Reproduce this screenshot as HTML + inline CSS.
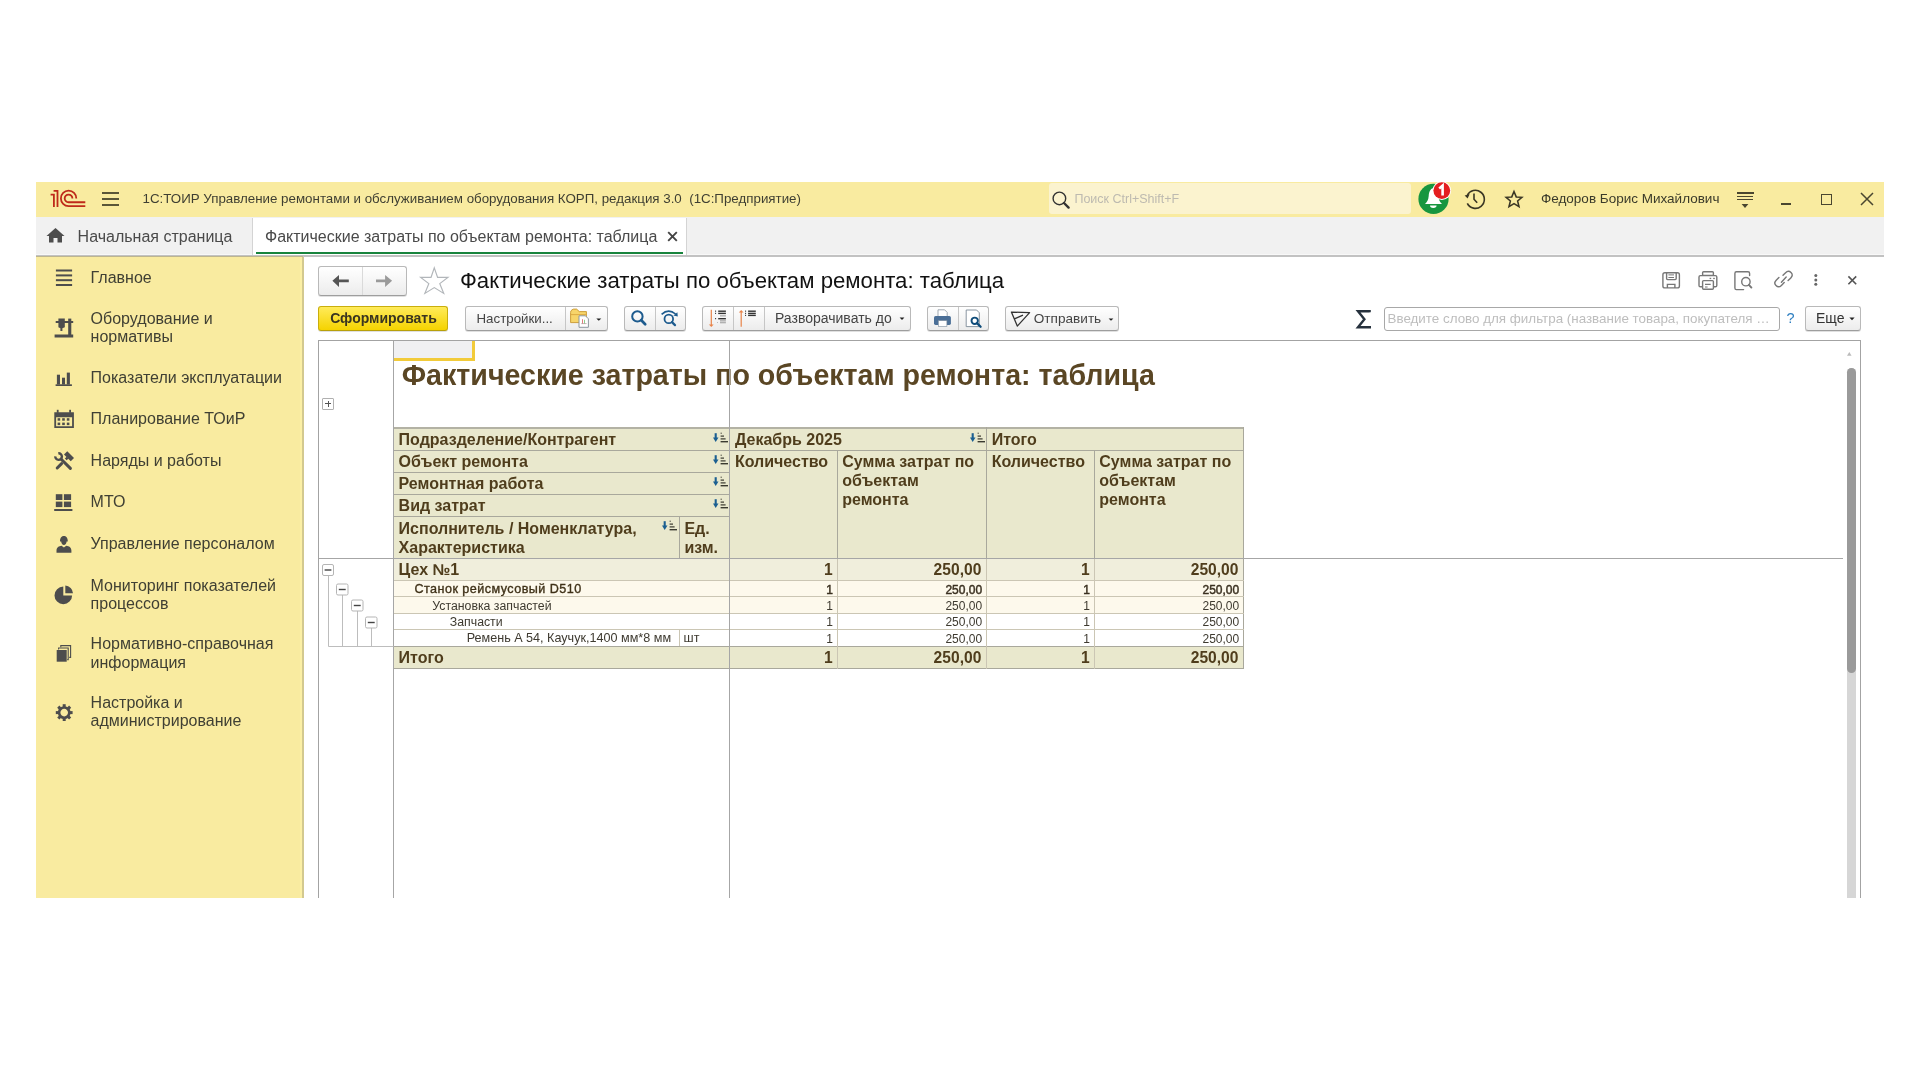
<!DOCTYPE html>
<html><head><meta charset="utf-8"><title>1C</title>
<style>
html,body{margin:0;padding:0;width:1920px;height:1080px;overflow:hidden;background:#fff;}
#root{position:absolute;left:0;top:0;width:1920px;height:1080px;background:#fff;filter:blur(0.35px);}
body{position:relative;font-family:"Liberation Sans", sans-serif;}
.t{position:absolute;white-space:pre;font-family:"Liberation Sans", sans-serif;}
.r{position:absolute;}
</style></head><body><div id="root">
<div class="r" style="left:36px;top:182px;width:1848px;height:35px;background:#F9EBA0;"></div>
<div class="r" style="left:36px;top:216.5px;width:1848px;height:1.1999999999999886px;background:#DDCD88;"></div>
<div class="r" style="left:36px;top:217px;width:1848px;height:37px;background:#F1F1F1;"></div>
<div class="r" style="left:36px;top:254px;width:1848px;height:1px;background:#F8F8F8;"></div>
<div class="r" style="left:36px;top:255px;width:1848px;height:2px;background:#C2C2C2;"></div>
<div class="r" style="left:36px;top:255.5px;width:267px;height:1.5px;background:#BDB590;"></div>
<div class="r" style="left:36px;top:257px;width:266px;height:641px;background:#F9EBA0;"></div>
<div class="r" style="left:299.5px;top:257px;width:2.5px;height:641px;background:#FBEFA5;"></div>
<div class="r" style="left:302px;top:257px;width:1.5px;height:641px;background:#D3C98F;"></div>
<div class="r" style="left:304px;top:257px;width:1580px;height:641px;background:#FFFFFF;"></div>
<svg class="r" style="left:44px;top:186px" width="50" height="26" viewBox="0 0 50 26">
<g fill="none" stroke="#BE2A1A" stroke-width="1.8">
<path d="M6.6 8.6 H9.9 V20.9"/><path d="M9.6 4.8 H13.5 V20.9"/>
<path d="M32.3 12.4 A7.7 7.7 0 1 0 24.6 20.1 H41.3"/>
<path d="M28.4 12.4 A3.85 3.85 0 1 0 24.6 16.25 H41.3"/>
</g></svg>
<div class="r" style="left:102px;top:192px;width:17px;height:2px;background:#5a5638;"></div>
<div class="r" style="left:102px;top:198px;width:17px;height:2px;background:#5a5638;"></div>
<div class="r" style="left:102px;top:204px;width:17px;height:2px;background:#5a5638;"></div>
<div class="t" style="left:142.50px;top:192.12px;font-size:13.33px;line-height:13.33px;color:#3F3F32;font-weight:400;">1С:ТОИР Управление ремонтами и обслуживанием оборудования КОРП, редакция 3.0&nbsp; (1С:Предприятие)</div>
<div class="r" style="left:1049px;top:183px;width:362px;height:31px;background:#FBF3CF;border-radius:3px;"></div>
<svg class="r" style="left:1049px;top:187.5px" width="26" height="26" viewBox="0 0 26 26">
<circle cx="10.4" cy="10.4" r="6.3" fill="none" stroke="#333" stroke-width="1.4"/>
<path d="M15 15 L19.6 19.6" stroke="#333" stroke-width="2.4" stroke-linecap="round"/></svg>
<div class="t" style="left:1074.40px;top:193.02px;font-size:12.5px;line-height:12.5px;color:#BDBAB0;font-weight:400;">Поиск Ctrl+Shift+F</div>
<svg class="r" style="left:1414px;top:180px" width="40" height="38" viewBox="0 0 40 38">
<circle cx="19.5" cy="18.9" r="15.1" fill="#17963F"/>
<path d="M19.3 8 C16 9 15 12 14.7 16 C14.4 20 13 22 11 24 H28 C26 22 24.6 20 24.3 16 C24 12 22.8 9 19.3 8 Z" fill="#fff"/>
<path d="M16 25.6 H22.6 A3.3 2.3 0 0 1 16 25.6 Z" fill="#fff"/>
<circle cx="27.8" cy="10.6" r="9.3" fill="#fff"/>
<circle cx="27.8" cy="10.6" r="8.4" fill="#E41E1F"/>
<path d="M25.2 8.4 L28.6 5.6 V15.6" fill="none" stroke="#fff" stroke-width="2.6" stroke-linejoin="miter"/>
</svg>
<svg class="r" style="left:1462px;top:187px" width="24" height="24" viewBox="0 0 24 24">
<path d="M5.2 8.5 A9 9 0 1 1 5.3 16.4" fill="none" stroke="#3a3624" stroke-width="1.6"/>
<path d="M2.6 8.6 L7.6 7.2 L5.6 11.6 Z" fill="#3a3624"/>
<path d="M12 6.6 V12.2 L15.2 15.8" fill="none" stroke="#3a3624" stroke-width="1.6"/>
</svg>
<svg class="r" style="left:1502px;top:187px" width="24" height="24" viewBox="0 0 24 24">
<path transform="translate(12 12.4) scale(0.86) translate(-12 -12)" d="M12 2.9 L14.6 9.1 L21.2 9.6 L16.2 13.9 L17.8 20.4 L12 16.9 L6.2 20.4 L7.8 13.9 L2.8 9.6 L9.4 9.1 Z" fill="none" stroke="#3a3624" stroke-width="1.8" stroke-linejoin="miter"/>
</svg>
<div class="t" style="left:1541.00px;top:191.97px;font-size:13.5px;line-height:13.5px;color:#3a3a2a;font-weight:400;">Федоров Борис Михайлович</div>
<div class="r" style="left:1736.5px;top:192.4px;width:17.09999999999991px;height:1.4000000000000057px;background:#4a4630;"></div>
<div class="r" style="left:1737px;top:195.5px;width:16.200000000000045px;height:1.4000000000000057px;background:#4a4630;"></div>
<div class="r" style="left:1737px;top:198.6px;width:16.200000000000045px;height:1.4000000000000057px;background:#4a4630;"></div>
<svg class="r" style="left:1740px;top:203px" width="10" height="6" viewBox="0 0 10 6"><path d="M1.6 1 H8.4 L5 5 Z" fill="#4a4630"/></svg>
<div class="r" style="left:1781px;top:203px;width:10px;height:2px;background:#4a4630;"></div>
<div class="r" style="left:1821px;top:194px;width:11px;height:11px;border:1.6px solid #4a4630;box-sizing:border-box;"></div>
<svg class="r" style="left:1859px;top:191px" width="16" height="16" viewBox="0 0 16 16"><path d="M2 2 L14 14 M14 2 L2 14" stroke="#4a4630" stroke-width="1.5"/></svg>
<svg class="r" style="left:46px;top:227px" width="20" height="17" viewBox="0 0 20 17">
<path d="M9.5 1 L18.5 9 H16 V15.5 H11.5 V11 H7.5 V15.5 H3 V9 H0.5 Z" fill="#4d4d4d"/></svg>
<div class="t" style="left:77.60px;top:229.26px;font-size:16px;line-height:16px;color:#4a4a4a;font-weight:400;">Начальная страница</div>
<div class="r" style="left:252px;top:218px;width:1px;height:37px;background:#D4D4D4;"></div>
<div class="r" style="left:253px;top:218px;width:433px;height:37px;background:#FFFFFF;"></div>
<div class="r" style="left:686px;top:218px;width:1px;height:37px;background:#D4D4D4;"></div>
<div class="r" style="left:256px;top:252px;width:427px;height:2px;background:#18843D;"></div>
<div class="t" style="left:265.00px;top:229.26px;font-size:16px;line-height:16px;color:#4a4a4a;font-weight:400;">Фактические затраты по объектам ремонта: таблица</div>
<svg class="r" style="left:666px;top:230px" width="13" height="13" viewBox="0 0 13 13"><path d="M2.2 2.2 L10.8 10.8 M10.8 2.2 L2.2 10.8" stroke="#444" stroke-width="1.9"/></svg>
<div class="t" style="left:90.60px;top:269.76px;font-size:16px;line-height:16px;color:#404034;font-weight:400;">Главное</div>
<div class="t" style="left:90.60px;top:310.56px;font-size:16px;line-height:16px;color:#404034;font-weight:400;">Оборудование и</div>
<div class="t" style="left:90.60px;top:328.76px;font-size:16px;line-height:16px;color:#404034;font-weight:400;">нормативы</div>
<div class="t" style="left:90.60px;top:369.76px;font-size:16px;line-height:16px;color:#404034;font-weight:400;">Показатели эксплуатации</div>
<div class="t" style="left:90.60px;top:411.36px;font-size:16px;line-height:16px;color:#404034;font-weight:400;">Планирование ТОиР</div>
<div class="t" style="left:90.60px;top:452.86px;font-size:16px;line-height:16px;color:#404034;font-weight:400;">Наряды и работы</div>
<div class="t" style="left:90.60px;top:494.36px;font-size:16px;line-height:16px;color:#404034;font-weight:400;">МТО</div>
<div class="t" style="left:90.60px;top:535.86px;font-size:16px;line-height:16px;color:#404034;font-weight:400;">Управление персоналом</div>
<div class="t" style="left:90.60px;top:577.66px;font-size:16px;line-height:16px;color:#404034;font-weight:400;">Мониторинг показателей</div>
<div class="t" style="left:90.60px;top:595.76px;font-size:16px;line-height:16px;color:#404034;font-weight:400;">процессов</div>
<div class="t" style="left:90.60px;top:636.46px;font-size:16px;line-height:16px;color:#404034;font-weight:400;">Нормативно-справочная</div>
<div class="t" style="left:90.60px;top:654.56px;font-size:16px;line-height:16px;color:#404034;font-weight:400;">информация</div>
<div class="t" style="left:90.60px;top:695.26px;font-size:16px;line-height:16px;color:#404034;font-weight:400;">Настройка и</div>
<div class="t" style="left:90.60px;top:713.36px;font-size:16px;line-height:16px;color:#404034;font-weight:400;">администрирование</div>
<svg class="r" style="left:0;top:0" width="304" height="898" viewBox="0 0 304 898">
<g fill="#4d4d4d">
<rect x="55.9" y="269.5" width="16.2" height="2"/><rect x="55.9" y="274.4" width="16.2" height="2"/><rect x="55.9" y="279.2" width="16.2" height="2"/><rect x="55.9" y="284" width="16.2" height="2"/>
<!-- equipment -->
<rect x="55.7" y="321" width="17.5" height="2"/>
<path d="M58.4 318.6 H64.8 V327.3 L62.4 328.2 V331 H60.4 V328.2 L58.4 327.3 Z"/>
<rect x="68.2" y="318.6" width="3.1" height="18"/>
<rect x="54.6" y="334.5" width="18.6" height="3"/>
<!-- chart -->
<rect x="56.9" y="374.7" width="3.1" height="9.8"/><rect x="62" y="377.7" width="3" height="6.8"/><rect x="66.8" y="372.6" width="3.1" height="11.9"/>
<rect x="55.6" y="384.3" width="16.3" height="1.7"/>
<!-- calendar -->
<path fill-rule="evenodd" d="M54.3 412.3 H73.9 V428.1 H54.3 Z M56.1 417.3 H72.1 V426.3 H56.1 Z"/>
<rect x="56.8" y="409.8" width="1.8" height="3"/><rect x="69.2" y="409.8" width="1.8" height="3"/>
<rect x="57.6" y="418.2" width="2.6" height="2.5"/><rect x="62.2" y="418.2" width="2.6" height="2.5"/><rect x="66.8" y="418.2" width="2.6" height="2.5"/>
<rect x="57.6" y="422.6" width="2.6" height="2.5"/><rect x="62.2" y="422.6" width="2.6" height="2.5"/><rect x="66.8" y="422.6" width="2.6" height="2.5"/>
<!-- MTO -->
<rect x="55.8" y="494.2" width="6.6" height="5.8"/><rect x="63.9" y="494.2" width="7.2" height="5.8"/>
<rect x="55.8" y="501.6" width="6.6" height="5.5"/><rect x="63.9" y="501.6" width="7.2" height="5.5"/>
<rect x="54.2" y="509" width="18.2" height="2"/>
<!-- person -->
<path d="M60 541.5 C60 537.5 61.8 536 63.9 536 C66 536 67.8 537.5 67.8 541.5 L66.6 541.6 C66.4 543.6 65.4 545 63.9 545 C62.4 545 61.4 543.6 61.2 541.6 Z"/>
<path d="M56.5 550.5 C56.5 547.6 59 546 61.5 545.8 L63.9 547.6 L66.3 545.8 C68.9 546 71.4 547.6 71.4 550.5 V552.8 H56.5 Z"/>
<!-- pie -->
<path d="M63.3 586.6 V595.4 H72.1 A8.8 8.8 0 1 1 63.3 586.6 Z"/>
<path d="M65.3 585.6 A8 8 0 0 1 73 593.3 H65.3 Z"/>
<!-- docs -->
<rect x="56.7" y="650" width="10" height="11.7"/>
</g>
<g fill="none" stroke="#4d4d4d" stroke-width="1.1">
<path d="M58.6 649.4 V648 H68.2 V659.6 H67.2"/>
<path d="M60.8 647.2 V645.6 H70.6 V657.4 H69.2"/>
</g>
<g transform="translate(52 448)" fill="none" stroke="#4d4d4d">
<path d="M9.2 11.2 L18.4 20.4" stroke-width="3" stroke-linecap="round"/>
<path d="M6.31 5.31 A3.3 3.3 0 1 1 3.31 8.31" stroke-width="2.4"/>
<path d="M5.2 20 L9.6 15.6" stroke-width="3" stroke-linecap="round"/>
</g>
<g transform="translate(69 456.2) rotate(45)" fill="#4d4d4d"><rect x="-4.8" y="-2.3" width="9.6" height="4.6"/><rect x="-1.3" y="2" width="2.6" height="2.6"/></g>
<g transform="translate(64.2 712.6)" fill="#4d4d4d">
<circle cx="0" cy="0" r="5.1" fill="none" stroke="#4d4d4d" stroke-width="2.6"/>
<rect x="-1.5" y="-8.4" width="3" height="3.4" transform="rotate(0)"/><rect x="-1.5" y="-8.4" width="3" height="3.4" transform="rotate(45)"/>
<rect x="-1.5" y="-8.4" width="3" height="3.4" transform="rotate(90)"/><rect x="-1.5" y="-8.4" width="3" height="3.4" transform="rotate(135)"/>
<rect x="-1.5" y="-8.4" width="3" height="3.4" transform="rotate(180)"/><rect x="-1.5" y="-8.4" width="3" height="3.4" transform="rotate(225)"/>
<rect x="-1.5" y="-8.4" width="3" height="3.4" transform="rotate(270)"/><rect x="-1.5" y="-8.4" width="3" height="3.4" transform="rotate(315)"/>
</g>
</svg>
<div class="r" style="left:318px;top:266px;width:89px;height:30px;box-sizing:border-box;border:1px solid #B9B9B9;border-bottom-color:#9E9E9E;border-radius:3px;background:linear-gradient(#FFFFFF,#ECECEC);box-shadow:0 1px 0 rgba(0,0,0,0.12);"></div>
<div class="r" style="left:362px;top:267px;width:1px;height:28px;background:#DADADA;"></div>
<svg class="r" style="left:316px;top:262px" width="140" height="38" viewBox="0 0 140 38">
<path d="M16.4 18.8 L23 12.9 V17.4 H32.8 V20.2 H23 V25.1 Z" fill="#555"/>
<path d="M76.1 18.8 L69.1 12.9 V17.4 H60 V20.2 H69.1 V25.1 Z" fill="#9A9A9A"/>
<path d="M118.3 5.9 L121.6 15.4 L131.9 15.4 L123.8 21.6 L127.7 31.4 L118.3 25.6 L108.9 31.4 L112.8 21.6 L104.7 15.4 L115 15.4 Z" fill="none" stroke="#B2B6BA" stroke-width="1.2"/>
</svg>
<div class="t" style="left:460.00px;top:269.81px;font-size:22.2px;line-height:22.2px;color:#111;font-weight:400;">Фактические затраты по объектам ремонта: таблица</div>
<svg class="r" style="left:1656px;top:266px" width="210" height="30" viewBox="0 0 210 30">
<g fill="none" stroke="#777" stroke-width="1.4">
<rect x="6.9" y="6.7" width="16.5" height="15.2" rx="2"/>
<path d="M10.6 6.9 V12.6 Q10.6 13.6 11.6 13.6 H19.2 Q20.2 13.6 20.2 12.6 V6.9"/>
<path d="M12.4 8.9 H18 M12.4 11.5 H18" stroke-width="1"/>
<path d="M11.4 22 V18.4 H18.9 V22"/>
<rect x="46.6" y="5.8" width="10.8" height="3.6" rx="1"/>
<path d="M46.3 20.8 H44.4 Q43 20.8 43 19.4 V11 Q43 9.6 44.4 9.6 H59.4 Q60.8 9.6 60.8 11 V19.4 Q60.8 20.8 59.4 20.8 H57.6"/>
<rect x="46.6" y="14.6" width="10.8" height="8.6" rx="1"/>
<path d="M49 18.4 H54.7 M49 21 H51.6" stroke-width="1.1"/>
</g>
<g fill="#777"><rect x="53.6" y="11.8" width="1.6" height="1.3"/><rect x="57.2" y="11.8" width="1.6" height="1.3"/></g>
<g fill="none" stroke="#777" stroke-width="1.4" stroke-linecap="round">
<path d="M87.7 15.5 V23.4 M79.6 9.5 Q" stroke="none"/>
<path d="M93.6 9.6 V7.4 Q93.6 5.8 92 5.8 H80.4 Q78.9 5.8 78.9 7.4 V22 Q78.9 23.6 80.4 23.6 H87.6"/>
<circle cx="89.9" cy="15.7" r="4.2"/>
<path d="M92.9 18.8 L95.4 21.6" stroke-width="1.9"/>
<path d="M122.9 11.5 L120.2 14.2 Q117.4 17 120 19.6 Q122.6 22.2 125.4 19.4 L128.2 16.6"/>
<path d="M127 9.3 L129.6 6.7 Q132.4 3.9 135 6.5 Q137.6 9.1 134.8 11.9 L132.1 14.6"/>
<path d="M125.4 16.2 L130.2 11.1"/>
</g>
<g fill="#666"><circle cx="159.8" cy="9.5" r="1.5"/><circle cx="159.8" cy="13.9" r="1.5"/><circle cx="159.8" cy="18.3" r="1.5"/></g>
<path d="M192.4 10.4 L200.2 18.2 M200.2 10.4 L192.4 18.2" stroke="#555" stroke-width="1.6"/>
</svg>
<div class="r" style="left:318px;top:306px;width:130px;height:25px;box-sizing:border-box;border:1px solid #C9AE0C;border-bottom-color:#B8A00A;border-radius:3px;background:linear-gradient(#FFEB5A,#F5D300);box-shadow:0 1px 0 rgba(0,0,0,0.12);"></div>
<div class="t" style="left:330.20px;top:311.35px;font-size:14px;line-height:14px;color:#3a3520;font-weight:700;">Сформировать</div>
<div class="r" style="left:465px;top:306px;width:143px;height:25px;box-sizing:border-box;border:1px solid #B9B9B9;border-bottom-color:#9E9E9E;border-radius:3px;background:linear-gradient(#FFFFFF,#ECECEC);box-shadow:0 1px 0 rgba(0,0,0,0.12);"></div>
<div class="r" style="left:565px;top:307px;width:1px;height:23px;background:#C6C6C6;"></div>
<div class="t" style="left:476.50px;top:311.94px;font-size:13.3px;line-height:13.3px;color:#444;font-weight:400;">Настройки...</div>
<svg class="r" style="left:562px;top:304px" width="50" height="30" viewBox="0 0 50 30">
<path d="M8.6 18.6 V8.4 Q8.6 6.6 10 5.8 L11.5 5.1 H14.6 L17.3 7.6 H24.4 V18.6 Z" fill="#F7D56A" stroke="#C8962E" stroke-width="0.9"/>
<path d="M8.6 10.6 H24.4" stroke="#D9A640" stroke-width="0.9"/>
<path d="M17 11.8 H23.4 L26.4 14.8 V23.3 H17 Z" fill="#fff" stroke="#8D979F" stroke-width="1"/>
<rect x="20" y="15.2" width="1" height="4.3" fill="#E07C7C"/><rect x="22" y="15.8" width="1" height="3.7" fill="#8FD08F"/>
<path d="M19.3 19.6 H24.6" stroke="#9a7a7a" stroke-width="0.6"/>
<path d="M34.3 14.4 H39.3 L36.8 16.8 Z" fill="#222"/>
</svg>
<div class="r" style="left:624px;top:306px;width:62px;height:25px;box-sizing:border-box;border:1px solid #B9B9B9;border-bottom-color:#9E9E9E;border-radius:3px;background:linear-gradient(#FFFFFF,#ECECEC);box-shadow:0 1px 0 rgba(0,0,0,0.12);"></div>
<div class="r" style="left:655px;top:307px;width:1px;height:23px;background:#C6C6C6;"></div>
<svg class="r" style="left:624px;top:304px" width="62" height="30" viewBox="0 0 62 30">
<g fill="none" stroke="#1D5B8E">
<circle cx="13.4" cy="12.4" r="5.2" stroke-width="2"/>
<path d="M17.3 16.3 L21.2 20.2" stroke-width="2.7" stroke-linecap="round"/>
<circle cx="44.8" cy="14.9" r="4.3" stroke-width="1.8"/>
<path d="M48 18.1 L51 21.1" stroke-width="2.2" stroke-linecap="round"/>
<path d="M37.6 10.3 Q44.5 4 51.6 10" stroke-width="1.6"/>
</g>
<path d="M49.4 11.6 L53.4 8.2 L53.8 12.4 Z" fill="#1D5B8E"/>
</svg>
<div class="r" style="left:702px;top:306px;width:209px;height:25px;box-sizing:border-box;border:1px solid #B9B9B9;border-bottom-color:#9E9E9E;border-radius:3px;background:linear-gradient(#FFFFFF,#ECECEC);box-shadow:0 1px 0 rgba(0,0,0,0.12);"></div>
<div class="r" style="left:733px;top:307px;width:1px;height:23px;background:#C6C6C6;"></div>
<div class="r" style="left:764px;top:307px;width:1px;height:23px;background:#C6C6C6;"></div>
<svg class="r" style="left:700px;top:304px" width="64" height="30" viewBox="0 0 64 30">
<g stroke="#E8844A" stroke-width="1.2" fill="none"><path d="M11.3 5.8 V21"/><path d="M41.2 8 V22.8"/></g>
<path d="M8.9 20.4 H13.7 L11.3 23 Z" fill="#E8844A"/><path d="M38.8 8.6 H43.6 L41.2 6 Z" fill="#E8844A"/>
<g fill="#333"><rect x="15" y="6.6" width="1.1" height="1.1"/><rect x="18.2" y="6.5" width="7.7" height="1.4"/>
<rect x="15" y="8.8" width="1.1" height="1.1"/><rect x="18.2" y="8.7" width="7.7" height="1.4"/>
<rect x="15" y="14.1" width="1.1" height="1.1"/><rect x="18.2" y="14" width="7.7" height="1.4"/></g>
<g fill="#AAA"><rect x="20" y="11.2" width="5.9" height="1.3"/><rect x="20" y="16.2" width="5.9" height="1.3"/><rect x="20" y="18.1" width="5.9" height="1.2"/><rect x="17" y="18" width="0.9" height="0.9"/></g>
<g fill="#333"><rect x="45" y="6.6" width="1.1" height="1.1"/><rect x="48.1" y="6.5" width="7.7" height="1.4"/>
<rect x="45" y="8.8" width="1.1" height="1.1"/><rect x="48.1" y="8.7" width="7.7" height="1.4"/>
<rect x="45" y="10.8" width="1.1" height="1.1"/><rect x="48.1" y="10.7" width="7.7" height="1.4"/></g>
</svg>
<div class="t" style="left:775.00px;top:311.35px;font-size:14px;line-height:14px;color:#444;font-weight:400;">Разворачивать до</div>
<svg class="r" style="left:898px;top:316px" width="8" height="6" viewBox="0 0 8 6"><path d="M1.6 1.6 H6.4 L4 4 Z" fill="#222"/></svg><div class="r" style="left:927px;top:306px;width:62px;height:25px;box-sizing:border-box;border:1px solid #B9B9B9;border-bottom-color:#9E9E9E;border-radius:3px;background:linear-gradient(#FFFFFF,#ECECEC);box-shadow:0 1px 0 rgba(0,0,0,0.12);"></div>
<div class="r" style="left:958px;top:307px;width:1px;height:23px;background:#C6C6C6;"></div>
<svg class="r" style="left:926px;top:304px" width="62" height="30" viewBox="0 0 62 30">
<path d="M12 12 V5.8 H18.6 L21.2 8.4 V12" fill="#fff" stroke="#8a96a0" stroke-width="0.8"/>
<rect x="8" y="12" width="16.9" height="8.9" rx="1.6" fill="#4B6F97"/>
<rect x="12.3" y="16.6" width="8.6" height="6" fill="#fff" stroke="#7a8a9a" stroke-width="0.6"/>
<path d="M40.2 6 H50.6 L53.3 8.8 V22.6 H40.2 Z" fill="#fff" stroke="#7d8a96" stroke-width="0.9"/>
<circle cx="48.7" cy="16.8" r="3.2" fill="none" stroke="#0F4C7A" stroke-width="1.9"/>
<path d="M51 19.1 L54.6 22.7" stroke="#0F4C7A" stroke-width="2.3" stroke-linecap="round"/>
</svg>
<div class="r" style="left:1005px;top:306px;width:114px;height:25px;box-sizing:border-box;border:1px solid #B9B9B9;border-bottom-color:#9E9E9E;border-radius:3px;background:linear-gradient(#FFFFFF,#ECECEC);box-shadow:0 1px 0 rgba(0,0,0,0.12);"></div>
<svg class="r" style="left:1005px;top:304px" width="114" height="30" viewBox="0 0 114 30">
<path d="M6.4 8.1 L24.6 8.6 L12.3 22.1 Z M9.4 14.9 L18 11.2" fill="none" stroke="#333" stroke-width="1.3" stroke-linejoin="round"/>
<path d="M103.6 14.4 H108.4 L106 16.8 Z" fill="#222"/>
</svg>
<div class="t" style="left:1033.80px;top:311.69px;font-size:13.6px;line-height:13.6px;color:#444;font-weight:400;">Отправить</div>
<svg class="r" style="left:1354px;top:308px" width="20" height="22" viewBox="0 0 20 22"><path d="M15.6 4.3 V3.2 H4 L10.4 11.3 L4 19.2 H15.8 V18" fill="none" stroke="#26313D" stroke-width="2.4" stroke-linejoin="miter"/></svg><div class="r" style="left:1384px;top:307px;width:396px;height:24px;box-sizing:border-box;border:1px solid #A8A8A8;border-radius:3px;background:#fff;"></div>
<div class="t" style="left:1387.50px;top:312.06px;font-size:13.4px;line-height:13.4px;color:#BDBDBD;font-weight:400;">Введите слово для фильтра (название товара, покупателя …</div>
<div class="t" style="left:1786.40px;top:311.33px;font-size:14.5px;line-height:14.5px;color:#2F7FC1;font-weight:400;">?</div>
<div class="r" style="left:1805px;top:306px;width:56px;height:25px;box-sizing:border-box;border:1px solid #B9B9B9;border-bottom-color:#9E9E9E;border-radius:3px;background:linear-gradient(#FFFFFF,#ECECEC);box-shadow:0 1px 0 rgba(0,0,0,0.12);"></div>
<div class="t" style="left:1816.00px;top:311.35px;font-size:14px;line-height:14px;color:#333;font-weight:400;">Еще</div>
<svg class="r" style="left:1848px;top:316px" width="8" height="6" viewBox="0 0 8 6"><path d="M1.4 1.6 H6.6 L4 4.2 Z" fill="#222"/></svg><div class="r" style="left:318px;top:340px;width:1543px;height:558px;box-sizing:border-box;border:1px solid #A3A3A3;border-bottom:none;background:#fff;"></div>
<div class="r" style="left:394px;top:341px;width:81px;height:20px;background:#F0F0F2;"></div>
<div class="r" style="left:394px;top:358px;width:81px;height:3px;background:#F2CB3A;"></div>
<div class="r" style="left:472px;top:341px;width:3px;height:20px;background:#F2CB3A;"></div>
<div class="r" style="left:322px;top:398px;width:12px;height:12px;box-sizing:border-box;border:1px solid #B0B0B0;background:#fff;border-radius:1px;"></div>
<div class="r" style="left:324.6px;top:403.4px;width:6.7999999999999545px;height:1.1000000000000227px;background:#555;"></div>
<div class="r" style="left:327.5px;top:400.5px;width:1.1000000000000227px;height:6.899999999999977px;background:#555;"></div>
<div class="t" style="left:401.70px;top:361.39px;font-size:28.6px;line-height:28.6px;color:#5A4624;font-weight:700;">Фактические затраты по объектам ремонта: таблица</div>
<div class="r" style="left:394px;top:428px;width:849px;height:130px;background:#E9E8CD;"></div>
<div class="r" style="left:394px;top:559px;width:849px;height:22px;background:#F0EEDC;"></div>
<div class="r" style="left:394px;top:581px;width:849px;height:32px;background:#FDF9EC;"></div>
<div class="r" style="left:394px;top:646px;width:849px;height:22px;background:#E9E8CD;"></div>
<div class="r" style="left:394px;top:427px;width:850px;height:2px;background:#B3B2A4;"></div>
<div class="r" style="left:394px;top:450px;width:336px;height:1px;background:#A9A89C;"></div>
<div class="r" style="left:394px;top:472px;width:336px;height:1px;background:#A9A89C;"></div>
<div class="r" style="left:394px;top:494px;width:336px;height:1px;background:#A9A89C;"></div>
<div class="r" style="left:730px;top:450px;width:514px;height:1px;background:#A9A89C;"></div>
<div class="r" style="left:394px;top:516px;width:336px;height:1px;background:#A9A89C;"></div>
<div class="r" style="left:679px;top:516px;width:1px;height:42px;background:#A9A89C;"></div>
<div class="r" style="left:837px;top:450px;width:1px;height:108px;background:#A9A89C;"></div>
<div class="r" style="left:986px;top:427px;width:1px;height:131px;background:#A9A89C;"></div>
<div class="r" style="left:1094px;top:450px;width:1px;height:108px;background:#A9A89C;"></div>
<div class="r" style="left:1243px;top:427px;width:1px;height:242px;background:#A9A89C;"></div>
<div class="r" style="left:394px;top:580px;width:850px;height:1px;background:#CBC6B4;"></div>
<div class="r" style="left:394px;top:596px;width:850px;height:1px;background:#CBC6B4;"></div>
<div class="r" style="left:394px;top:613px;width:850px;height:1px;background:#CBC6B4;"></div>
<div class="r" style="left:394px;top:629px;width:850px;height:1px;background:#CBC6B4;"></div>
<div class="r" style="left:394px;top:646px;width:850px;height:1px;background:#A9A89C;"></div>
<div class="r" style="left:394px;top:668px;width:850px;height:1px;background:#A9A89C;"></div>
<div class="r" style="left:679px;top:630px;width:1px;height:16px;background:#CBC6B4;"></div>
<div class="r" style="left:837px;top:559px;width:1px;height:110px;background:#CBC6B4;"></div>
<div class="r" style="left:986px;top:559px;width:1px;height:110px;background:#CBC6B4;"></div>
<div class="r" style="left:1094px;top:559px;width:1px;height:110px;background:#CBC6B4;"></div>
<div class="r" style="left:393px;top:341px;width:1px;height:557px;background:#A6A6A6;"></div>
<div class="r" style="left:729px;top:341px;width:1px;height:557px;background:#A6A6A6;"></div>
<div class="r" style="left:319px;top:558px;width:1524px;height:1px;background:#A6A6A6;"></div>
<svg class="r" style="left:712.6px;top:432.4px" width="16" height="12" viewBox="0 0 16 12">
<path d="M2.7 1.2 V6.4" stroke="#1B5F91" stroke-width="2.1"/><path d="M-0.1 5.4 H5.5 L2.7 10 Z" fill="#1B5F91"/>
<g fill="#3a3a30"><rect x="7.6" y="0.7" width="1.2" height="1"/><rect x="7.6" y="3.5" width="3.4" height="1.2"/><rect x="7.6" y="6.3" width="5" height="1.2"/><rect x="7.6" y="9" width="7.4" height="1.4"/></g>
</svg>
<svg class="r" style="left:712.6px;top:454.4px" width="16" height="12" viewBox="0 0 16 12">
<path d="M2.7 1.2 V6.4" stroke="#1B5F91" stroke-width="2.1"/><path d="M-0.1 5.4 H5.5 L2.7 10 Z" fill="#1B5F91"/>
<g fill="#3a3a30"><rect x="7.6" y="0.7" width="1.2" height="1"/><rect x="7.6" y="3.5" width="3.4" height="1.2"/><rect x="7.6" y="6.3" width="5" height="1.2"/><rect x="7.6" y="9" width="7.4" height="1.4"/></g>
</svg>
<svg class="r" style="left:712.6px;top:476.4px" width="16" height="12" viewBox="0 0 16 12">
<path d="M2.7 1.2 V6.4" stroke="#1B5F91" stroke-width="2.1"/><path d="M-0.1 5.4 H5.5 L2.7 10 Z" fill="#1B5F91"/>
<g fill="#3a3a30"><rect x="7.6" y="0.7" width="1.2" height="1"/><rect x="7.6" y="3.5" width="3.4" height="1.2"/><rect x="7.6" y="6.3" width="5" height="1.2"/><rect x="7.6" y="9" width="7.4" height="1.4"/></g>
</svg>
<svg class="r" style="left:712.6px;top:498.4px" width="16" height="12" viewBox="0 0 16 12">
<path d="M2.7 1.2 V6.4" stroke="#1B5F91" stroke-width="2.1"/><path d="M-0.1 5.4 H5.5 L2.7 10 Z" fill="#1B5F91"/>
<g fill="#3a3a30"><rect x="7.6" y="0.7" width="1.2" height="1"/><rect x="7.6" y="3.5" width="3.4" height="1.2"/><rect x="7.6" y="6.3" width="5" height="1.2"/><rect x="7.6" y="9" width="7.4" height="1.4"/></g>
</svg>
<svg class="r" style="left:969.6px;top:432.4px" width="16" height="12" viewBox="0 0 16 12">
<path d="M2.7 1.2 V6.4" stroke="#1B5F91" stroke-width="2.1"/><path d="M-0.1 5.4 H5.5 L2.7 10 Z" fill="#1B5F91"/>
<g fill="#3a3a30"><rect x="7.6" y="0.7" width="1.2" height="1"/><rect x="7.6" y="3.5" width="3.4" height="1.2"/><rect x="7.6" y="6.3" width="5" height="1.2"/><rect x="7.6" y="9" width="7.4" height="1.4"/></g>
</svg>
<svg class="r" style="left:662.4px;top:520px" width="16" height="12" viewBox="0 0 16 12">
<path d="M2.7 1.2 V6.4" stroke="#1B5F91" stroke-width="2.1"/><path d="M-0.1 5.4 H5.5 L2.7 10 Z" fill="#1B5F91"/>
<g fill="#3a3a30"><rect x="7.6" y="0.7" width="1.2" height="1"/><rect x="7.6" y="3.5" width="3.4" height="1.2"/><rect x="7.6" y="6.3" width="5" height="1.2"/><rect x="7.6" y="9" width="7.4" height="1.4"/></g>
</svg>
<div class="t" style="left:398.60px;top:431.86px;font-size:16px;line-height:16px;color:#4F3D1C;font-weight:700;">Подразделение/Контрагент</div>
<div class="t" style="left:398.60px;top:453.86px;font-size:16px;line-height:16px;color:#4F3D1C;font-weight:700;">Объект ремонта</div>
<div class="t" style="left:398.60px;top:475.86px;font-size:16px;line-height:16px;color:#4F3D1C;font-weight:700;">Ремонтная работа</div>
<div class="t" style="left:398.60px;top:497.86px;font-size:16px;line-height:16px;color:#4F3D1C;font-weight:700;">Вид затрат</div>
<div class="t" style="left:398.60px;top:520.76px;font-size:16px;line-height:16px;color:#4F3D1C;font-weight:700;">Исполнитель / Номенклатура,</div>
<div class="t" style="left:398.60px;top:539.76px;font-size:16px;line-height:16px;color:#4F3D1C;font-weight:700;">Характеристика</div>
<div class="t" style="left:684.40px;top:520.76px;font-size:16px;line-height:16px;color:#4F3D1C;font-weight:700;">Ед.</div>
<div class="t" style="left:684.40px;top:539.76px;font-size:16px;line-height:16px;color:#4F3D1C;font-weight:700;">изм.</div>
<div class="t" style="left:734.90px;top:431.86px;font-size:16px;line-height:16px;color:#4F3D1C;font-weight:700;">Декабрь 2025</div>
<div class="t" style="left:991.70px;top:431.86px;font-size:16px;line-height:16px;color:#4F3D1C;font-weight:700;">Итого</div>
<div class="t" style="left:734.90px;top:453.86px;font-size:16px;line-height:16px;color:#4F3D1C;font-weight:700;">Количество</div>
<div class="t" style="left:991.70px;top:453.86px;font-size:16px;line-height:16px;color:#4F3D1C;font-weight:700;">Количество</div>
<div class="t" style="left:842.20px;top:453.86px;font-size:16px;line-height:16px;color:#4F3D1C;font-weight:700;">Сумма затрат по</div>
<div class="t" style="left:842.20px;top:472.86px;font-size:16px;line-height:16px;color:#4F3D1C;font-weight:700;">объектам</div>
<div class="t" style="left:842.20px;top:491.86px;font-size:16px;line-height:16px;color:#4F3D1C;font-weight:700;">ремонта</div>
<div class="t" style="left:1099.30px;top:453.86px;font-size:16px;line-height:16px;color:#4F3D1C;font-weight:700;">Сумма затрат по</div>
<div class="t" style="left:1099.30px;top:472.86px;font-size:16px;line-height:16px;color:#4F3D1C;font-weight:700;">объектам</div>
<div class="t" style="left:1099.30px;top:491.86px;font-size:16px;line-height:16px;color:#4F3D1C;font-weight:700;">ремонта</div>
<div class="t" style="left:398.60px;top:561.96px;font-size:16px;line-height:16px;color:#4F3D1C;font-weight:700;">Цех №1</div>
<div class="t" style="left:414.50px;top:583.13px;font-size:12.6px;line-height:12.6px;color:#3F3118;font-weight:400;-webkit-text-stroke:0.35px #3F3118;letter-spacing:0.45px;">Станок рейсмусовый D510</div>
<div class="t" style="left:432.30px;top:599.79px;font-size:12.3px;line-height:12.3px;color:#3E3A30;font-weight:400;">Установка запчастей</div>
<div class="t" style="left:449.80px;top:616.19px;font-size:12.3px;line-height:12.3px;color:#3E3A30;font-weight:400;">Запчасти</div>
<div class="t" style="left:466.70px;top:632.33px;font-size:12.6px;line-height:12.6px;color:#3E3A30;font-weight:400;">Ремень А 54, Каучук,1400 мм*8 мм</div>
<div class="t" style="left:683.60px;top:632.33px;font-size:12.6px;line-height:12.6px;color:#3E3A30;font-weight:400;">шт</div>
<div class="t" style="left:398.60px;top:650.46px;font-size:16px;line-height:16px;color:#4F3D1C;font-weight:700;">Итого</div>
<div class="t" style="right:1087.40px;top:562.39px;font-size:15.6px;line-height:15.6px;color:#4F3D1C;font-weight:700;">1</div>
<div class="t" style="right:938.70px;top:562.39px;font-size:15.6px;line-height:15.6px;color:#4F3D1C;font-weight:700;">250,00</div>
<div class="t" style="right:830.40px;top:562.39px;font-size:15.6px;line-height:15.6px;color:#4F3D1C;font-weight:700;">1</div>
<div class="t" style="right:681.60px;top:562.39px;font-size:15.6px;line-height:15.6px;color:#4F3D1C;font-weight:700;">250,00</div>
<div class="t" style="right:1087.00px;top:583.64px;font-size:12px;line-height:12px;color:#3A3020;font-weight:400;-webkit-text-stroke:0.45px #3A3020;">1</div>
<div class="t" style="right:937.90px;top:583.64px;font-size:12px;line-height:12px;color:#3A3020;font-weight:400;-webkit-text-stroke:0.45px #3A3020;">250,00</div>
<div class="t" style="right:830.00px;top:583.64px;font-size:12px;line-height:12px;color:#3A3020;font-weight:400;-webkit-text-stroke:0.45px #3A3020;">1</div>
<div class="t" style="right:680.80px;top:583.64px;font-size:12px;line-height:12px;color:#3A3020;font-weight:400;-webkit-text-stroke:0.45px #3A3020;">250,00</div>
<div class="t" style="right:1087.00px;top:600.04px;font-size:12px;line-height:12px;color:#3E3A30;font-weight:400;">1</div>
<div class="t" style="right:937.90px;top:600.04px;font-size:12px;line-height:12px;color:#3E3A30;font-weight:400;">250,00</div>
<div class="t" style="right:830.00px;top:600.04px;font-size:12px;line-height:12px;color:#3E3A30;font-weight:400;">1</div>
<div class="t" style="right:680.80px;top:600.04px;font-size:12px;line-height:12px;color:#3E3A30;font-weight:400;">250,00</div>
<div class="t" style="right:1087.00px;top:616.44px;font-size:12px;line-height:12px;color:#3E3A30;font-weight:400;">1</div>
<div class="t" style="right:937.90px;top:616.44px;font-size:12px;line-height:12px;color:#3E3A30;font-weight:400;">250,00</div>
<div class="t" style="right:830.00px;top:616.44px;font-size:12px;line-height:12px;color:#3E3A30;font-weight:400;">1</div>
<div class="t" style="right:680.80px;top:616.44px;font-size:12px;line-height:12px;color:#3E3A30;font-weight:400;">250,00</div>
<div class="t" style="right:1087.00px;top:632.84px;font-size:12px;line-height:12px;color:#3E3A30;font-weight:400;">1</div>
<div class="t" style="right:937.90px;top:632.84px;font-size:12px;line-height:12px;color:#3E3A30;font-weight:400;">250,00</div>
<div class="t" style="right:830.00px;top:632.84px;font-size:12px;line-height:12px;color:#3E3A30;font-weight:400;">1</div>
<div class="t" style="right:680.80px;top:632.84px;font-size:12px;line-height:12px;color:#3E3A30;font-weight:400;">250,00</div>
<div class="t" style="right:1087.40px;top:649.99px;font-size:15.6px;line-height:15.6px;color:#4F3D1C;font-weight:700;">1</div>
<div class="t" style="right:938.70px;top:649.99px;font-size:15.6px;line-height:15.6px;color:#4F3D1C;font-weight:700;">250,00</div>
<div class="t" style="right:830.40px;top:649.99px;font-size:15.6px;line-height:15.6px;color:#4F3D1C;font-weight:700;">1</div>
<div class="t" style="right:681.60px;top:649.99px;font-size:15.6px;line-height:15.6px;color:#4F3D1C;font-weight:700;">250,00</div>
<svg class="r" style="left:318px;top:555px" width="80" height="95" viewBox="0 0 80 95">
<g stroke="#BDBDBD" stroke-width="1" fill="none">
<path d="M10.5 20 V91.5 H75.5"/><path d="M24.5 40 V91.5"/><path d="M39.5 56 V91.5"/><path d="M53.5 72 V91.5"/>
</g>
<g fill="#fff" stroke="#B5B5B5" stroke-width="1">
<rect x="4.5" y="9.5" width="11" height="11" rx="1.5"/><rect x="18.5" y="29" width="11.5" height="11" rx="1.5"/>
<rect x="33.5" y="45" width="11.5" height="11" rx="1.5"/><rect x="47.5" y="62" width="11.5" height="11" rx="1.5"/>
</g>
<g fill="#444"><rect x="6.6" y="14.3" width="6.8" height="1.4"/><rect x="20.8" y="33.8" width="6.9" height="1.4"/><rect x="35.8" y="49.8" width="6.9" height="1.4"/><rect x="49.8" y="66.8" width="6.9" height="1.4"/></g>
</svg>
<svg class="r" style="left:1840px;top:345px" width="20" height="12" viewBox="0 0 20 12"><path d="M9.3 7 L11.6 10.7 H7 Z" fill="#BBB"/></svg><div class="r" style="left:1846.5px;top:368px;width:9.5px;height:530px;background:#D6D6D6;border-radius:5px 5px 0 0;"></div>
<div class="r" style="left:1846.5px;top:368px;width:9.5px;height:305px;background:#9A9A9A;border-radius:5px;"></div>
</div></body></html>
